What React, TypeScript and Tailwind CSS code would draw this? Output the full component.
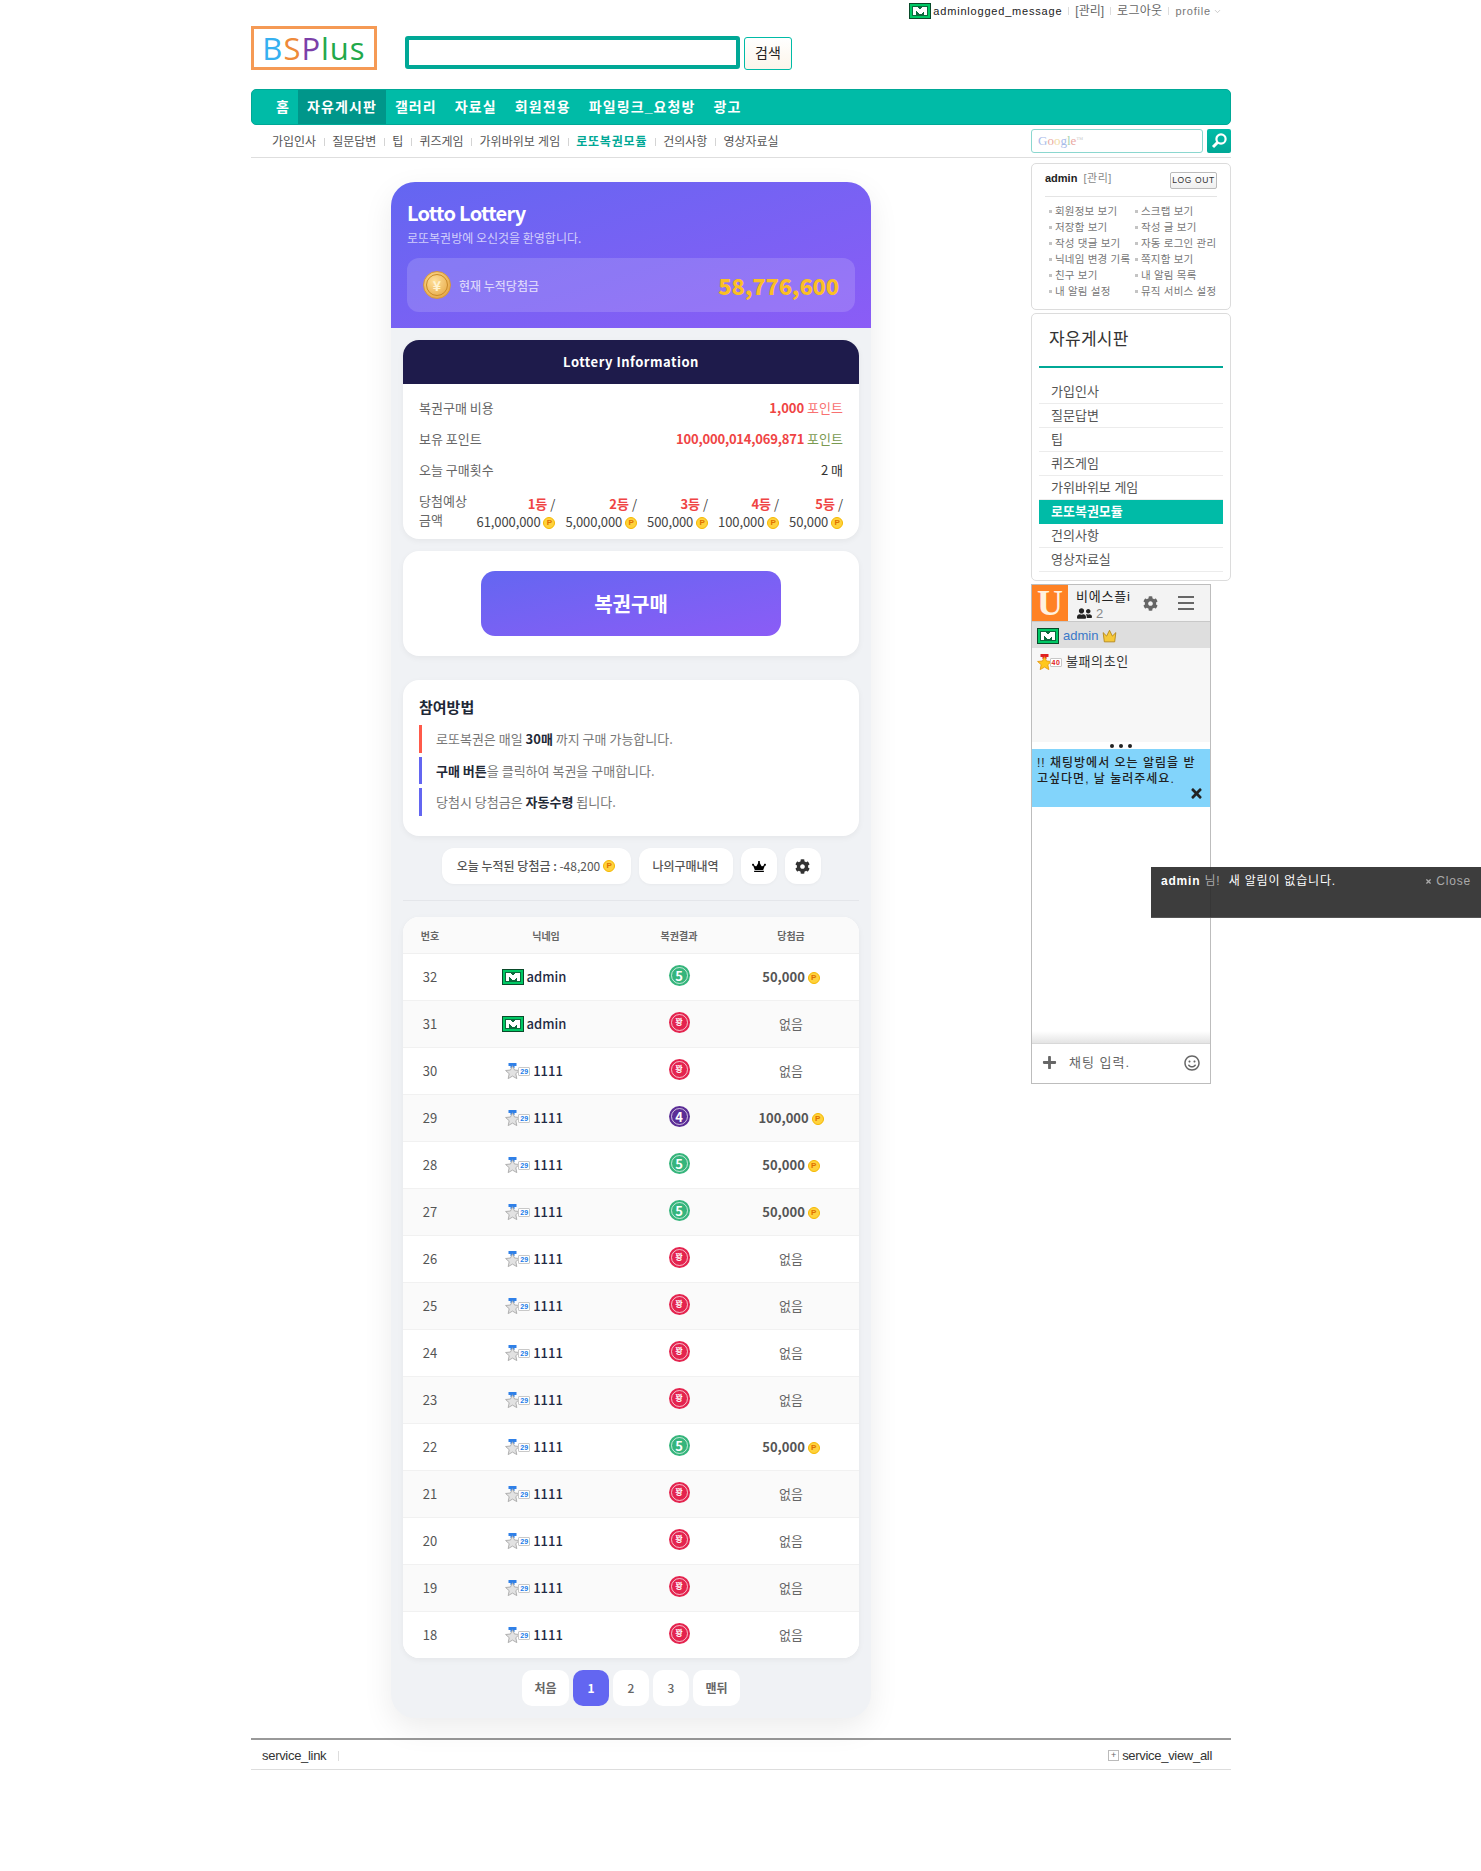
import React from "react";
import { FaCog, FaCrown, FaPlus, FaRegSmile, FaTimes, FaUserFriends } from "react-icons/fa";
import { ChevronDown } from "lucide-react";

function MBadge() {
  return (
    <svg width="22" height="16" viewBox="0 0 22 16" className="shrink-0" shapeRendering="crispEdges">
      <rect width="22" height="16" fill="#0a4a2a" />
      <rect x="1" y="1" width="20" height="14" fill="#00c864" />
      <rect x="3" y="3" width="16" height="10" fill="#0b6a3c" />
      <path d="M4 4h5l2 3 2-3h5v8h-3V8l-3 3h-2L7 8v4H4z" fill="#fff" />
    </svg>
  );
}

function Medal({ n = "29", gold = false }: { n?: string; gold?: boolean }) {
  const ribbon = gold ? "#e02020" : "#2f80e8";
  const star = gold ? "#ffc81e" : "#e2e2e2";
  const edge = gold ? "#e89a10" : "#a8a8a8";
  return (
    <span className="inline-flex items-center shrink-0">
      <svg width="15" height="17" viewBox="0 0 15 17" className="shrink-0">
        <rect x="3.5" y="0" width="8" height="3" fill={ribbon} />
        <rect x="5.5" y="3" width="4" height="2" fill={ribbon} />
        <path d="M7.5 2.8l2 4.2 4.9.5-3.6 3.2 1 4.9-4.3-2.5-4.3 2.5 1-4.9L.6 7.5 5.5 7z" fill={star} stroke={edge} strokeWidth="0.9" />
      </svg>
      <span className={`-ml-[2px] flex h-[9px] w-[12px] items-center justify-center rounded-[1px] border border-[#c8c8c8] bg-white font-['Liberation_Sans',sans-serif] text-[7px] leading-none font-bold ${gold ? "text-[#e02020]" : "text-[#1a7ae8]"}`}>{n}</span>
    </span>
  );
}

function Coin({ className = "" }: { className?: string }) {
  return (
    <span className={`inline-flex h-[12px] w-[12px] items-center justify-center rounded-full border border-[#f5b800] bg-[#ffd23c] align-[2px] font-['Liberation_Sans',sans-serif] text-[8px] leading-none font-bold text-[#e07000] ${className}`}>P</span>
  );
}

function Ball({ kind }: { kind: "5" | "4" | "꽝" }) {
  const cls = kind === "5" ? "bg-[#36b57c]" : kind === "4" ? "bg-[#5b2d96]" : "bg-[#e4244f]";
  return (
    <div className={`flex h-[21px] w-[21px] -translate-y-[2px] items-center justify-center rounded-full ${cls}`}>
      <div className={`flex h-[17px] w-[17px] items-center justify-center rounded-full border border-white/70 font-bold text-white ${kind === "꽝" ? "text-[8px]" : "text-[13px]"} leading-none`}>{kind}</div>
    </div>
  );
}

const rows: [string, boolean, "5" | "4" | "꽝", string][] = [
  ["32", true, "5", "50,000"],
  ["31", true, "꽝", ""],
  ["30", false, "꽝", ""],
  ["29", false, "4", "100,000"],
  ["28", false, "5", "50,000"],
  ["27", false, "5", "50,000"],
  ["26", false, "꽝", ""],
  ["25", false, "꽝", ""],
  ["24", false, "꽝", ""],
  ["23", false, "꽝", ""],
  ["22", false, "5", "50,000"],
  ["21", false, "꽝", ""],
  ["20", false, "꽝", ""],
  ["19", false, "꽝", ""],
  ["18", false, "꽝", ""],
];

const prizes = [
  ["1등", "61,000,000"],
  ["2등", "5,000,000"],
  ["3등", "500,000"],
  ["4등", "100,000"],
  ["5등", "50,000"],
];

const subNav = ["가입인사", "질문답변", "팁", "퀴즈게임", "가위바위보 게임", "로또복권모듈", "건의사항", "영상자료실"];
const mainNav = ["홈", "자유게시판", "갤러리", "자료실", "회원전용", "파일링크_요청방", "광고"];
const loginLinks = [
  "회원정보 보기", "스크랩 보기",
  "저장함 보기", "작성 글 보기",
  "작성 댓글 보기", "자동 로그인 관리",
  "닉네임 변경 기록", "쪽지함 보기",
  "친구 보기", "내 알림 목록",
  "내 알림 설정", "뮤직 서비스 설정",
];

function Lottery() {
  return (
    <div className="mx-auto w-[480px] rounded-[24px] bg-[#f0f2f5] pb-3 font-['Noto_Sans_CJK_KR','Noto_Sans',sans-serif] shadow-[0_10px_30px_rgba(0,0,0,0.08)]">
      <div className="h-[146px] rounded-t-[24px] bg-gradient-to-br from-[#6366f1] to-[#8b5cf6] px-4 pt-[19px]">
        <div className="text-[20px] leading-[24px] font-bold tracking-[-0.7px] text-white">Lotto Lottery</div>
        <div className="mt-[4px] text-[12px] leading-[18px] text-white/70">로또복권방에 오신것을 환영합니다.</div>
        <div className="mt-[11px] flex h-[54px] items-center justify-between rounded-[12px] bg-white/15 px-4">
          <div className="flex items-center gap-2">
            <div className="flex h-[28px] w-[28px] items-center justify-center rounded-full border border-[#d89838] bg-[radial-gradient(circle_at_40%_35%,#ffe09a,#e09a30)]">
              <div className="flex h-[22px] w-[22px] items-center justify-center rounded-full border border-[#c98a28] text-[14px] font-bold text-[#fff3d0]">¥</div>
            </div>
            <span className="pt-px text-[12px] font-medium text-white/70">현재 누적당첨금</span>
          </div>
          <span className="text-[22px] font-black tracking-[-0.2px] text-[#fbbf24]">58,776,600</span>
        </div>
      </div>

      <div className="mx-3 mt-3 rounded-[16px] bg-white pb-[7px] shadow-[0_2px_6px_rgba(0,0,0,0.05)]">
        <div className="flex h-[44px] items-center justify-center rounded-t-[16px] bg-[#1e1b4b] text-[13px] font-bold tracking-[0.5px] text-white">Lottery Information</div>
        <div className="px-4 pt-2 text-[13px]">
          <div className="flex h-[31px] items-center justify-between text-[#666]">
            <span>복권구매 비용</span>
            <span className="text-[#ef4444]"><b className="font-bold">1,000</b> <span className="text-[#f87171]">포인트</span></span>
          </div>
          <div className="flex h-[31px] items-center justify-between text-[#666]">
            <span>보유 포인트</span>
            <span><b className="font-bold tracking-[-0.2px] text-[#ef4444]">100,000,014,069,871</b> <span className="text-[#7a9a50]">포인트</span></span>
          </div>
          <div className="flex h-[31px] items-center justify-between text-[#666]">
            <span>오늘 구매횟수</span>
            <span className="text-[#333]">2 매</span>
          </div>
          <div className="flex items-center justify-between pt-[5px] pb-[3px] text-[#666]">
            <span className="leading-[19px]">당첨예상<br />금액</span>
            <div className="flex translate-y-[2px] gap-[10px] pt-[3px]">
              {prizes.map(([a, b]) => (
                <div key={a} className="text-right leading-[18px]">
                  <div><b className="font-bold text-[#ef4444]">{a}</b> <span className="text-[#444]">/</span></div>
                  <div className="tracking-[-0.1px] text-[#444]">{b} <Coin /></div>
                </div>
              ))}
            </div>
          </div>
        </div>
      </div>

      <div className="mx-3 mt-3 rounded-[16px] bg-white px-[78px] py-5 shadow-[0_2px_6px_rgba(0,0,0,0.05)]">
        <div className="flex h-[65px] items-center justify-center rounded-[14px] bg-gradient-to-br from-[#6366f1] to-[#8b5cf6] pt-px text-[20px] font-bold text-white">복권구매</div>
      </div>

      <div className="mx-3 mt-6 h-[156px] rounded-[16px] bg-white px-4 pt-[16px] shadow-[0_2px_6px_rgba(0,0,0,0.05)]">
        <div className="text-[15px] leading-[22px] font-bold text-[#1f2937]">참여방법</div>
        <div className="mt-[7px] flex h-[28px] items-center border-l-[3px] border-[#ff5a4a] pl-[14px] text-[13px] text-[#777]"><span>로또복권은 매일 <b className="font-bold text-[#1f2937]">30매</b> 까지 구매 가능합니다.</span></div>
        <div className="mt-1 flex h-[27px] items-center border-l-[3px] border-[#6366f1] pl-[14px] text-[13px] text-[#777]"><span><b className="font-bold text-[#1f2937]">구매 버튼</b>을 클릭하여 복권을 구매합니다.</span></div>
        <div className="mt-1 flex h-[28px] items-center border-l-[3px] border-[#6366f1] pl-[14px] text-[13px] text-[#777]"><span>당첨시 당첨금은 <b className="font-bold text-[#1f2937]">자동수령</b> 됩니다.</span></div>
      </div>

      <div className="mt-3 flex justify-center gap-2">
        <div className="flex h-[36px] w-[189px] items-center justify-center gap-[3px] rounded-[12px] bg-white text-[12px] text-[#555] shadow-[0_1px_3px_rgba(0,0,0,0.04)]"><span><b className="font-medium">오늘 누적된 당첨금 :</b> -48,200</span> <Coin /></div>
        <div className="flex h-[36px] w-[94px] items-center justify-center rounded-[12px] bg-white text-[12px] font-medium text-[#555] shadow-[0_1px_3px_rgba(0,0,0,0.04)]">나의구매내역</div>
        <div className="flex h-[36px] w-[36px] items-center justify-center rounded-[12px] bg-white shadow-[0_1px_3px_rgba(0,0,0,0.04)]"><FaCrown className="h-[13px] w-[14px] text-black" /></div>
        <div className="flex h-[36px] w-[36px] items-center justify-center rounded-[12px] bg-white shadow-[0_1px_3px_rgba(0,0,0,0.04)]"><FaCog className="h-[15px] w-[15px] text-[#333]" /></div>
      </div>

      <div className="mx-3 mt-4 border-t border-[#e4e6ea]" />

      <div className="mx-3 mt-4 overflow-hidden rounded-[16px] bg-white shadow-[0_2px_6px_rgba(0,0,0,0.05)]">
        <div className="grid h-[37px] grid-cols-[54px_178px_88px_136px] items-center border-b border-[#f0f0f0] bg-[#fafafa] pt-px text-center text-[10px] font-bold text-[#666]">
          <div>번호</div><div>닉네임</div><div>복권결과</div><div>당첨금</div>
        </div>
        {rows.map(([no, admin, ball, prize], i) => (
          <div key={no} className={`grid h-[47px] grid-cols-[54px_178px_88px_136px] items-center border-b border-[#f1f1f1] text-center text-[13px] last:h-[46px] last:border-b-0 ${i % 2 ? "bg-[#fafafa]" : "bg-white"}`}>
            <div className="text-[#555]">{no}</div>
            <div className="flex items-center justify-center gap-[3px] pr-[24px] font-medium text-[#1f2a44]">
              {admin ? <MBadge /> : <Medal />}
              <span>{admin ? "admin" : "1111"}</span>
            </div>
            <div className="flex justify-center"><Ball kind={ball} /></div>
            <div>
              {prize ? <span className="font-semibold text-[#555]">{prize} <Coin /></span> : <span className="text-[#666]">없음</span>}
            </div>
          </div>
        ))}
      </div>

      <div className="mt-3 flex justify-center gap-[4px] text-[12px] font-semibold text-[#666]">
        <div className="flex h-[36px] w-[47px] items-center justify-center rounded-[10px] bg-white">처음</div>
        <div className="flex h-[36px] w-[36px] items-center justify-center rounded-[10px] bg-[#6366f1] font-bold text-white">1</div>
        <div className="flex h-[36px] w-[36px] items-center justify-center rounded-[10px] bg-white font-medium">2</div>
        <div className="flex h-[36px] w-[36px] items-center justify-center rounded-[10px] bg-white font-medium">3</div>
        <div className="flex h-[36px] w-[47px] items-center justify-center rounded-[10px] bg-white">맨뒤</div>
      </div>
    </div>
  );
}

function Sidebar() {
  return (
    <aside className="w-[200px] shrink-0 pt-[5px] font-['Liberation_Sans','Noto_Sans_CJK_KR',sans-serif]">
      <div className="h-[147px] rounded-[5px] border border-[#dcdcdc] px-[13px] pt-[8px]">
        <div className="flex h-[25px] items-start justify-between border-b border-[#e4e4e4]">
          <div className="-mt-[2px] text-[11px]"><b className="text-[#222]">admin</b> <span className="ml-[3px] tracking-[0.5px] text-[#888]">[관리]</span></div>
          <div className="flex h-[17px] w-[47px] items-center justify-center rounded-[2px] border border-[#bbb] bg-gradient-to-b from-white to-[#efefef] text-[8.5px] tracking-[0.6px] text-[#333]">LOG OUT</div>
        </div>
        <div className="mt-[6px] grid grid-cols-[86px_1fr] text-[10.5px] leading-[16px] tracking-[0.2px] whitespace-nowrap text-[#777]">
          {loginLinks.map((l) => (
            <div key={l} className="flex items-center gap-[3px] pl-[4px]"><span className="h-[3px] w-[3px] bg-[#c4c4c4]" />{l}</div>
          ))}
        </div>
      </div>

      <div className="mt-[3px] h-[268px] rounded-[5px] border border-[#dcdcdc] px-[7px]">
        <div className="flex h-[54px] items-center border-b-2 border-[#00a896] pl-[10px] text-[17px] tracking-[0.3px] text-[#333]">자유게시판</div>
        <div className="pt-[12px] text-[13px] text-[#555]">
          {subNav.map((s) => (
            <div key={s} className={`flex h-[24px] items-center pl-[12px] ${s === "로또복권모듈" ? "bg-[#00bba7] font-bold text-white" : "border-b border-[#ececec]"}`}>{s}</div>
          ))}
        </div>
      </div>
    </aside>
  );
}

function Chat() {
  return (
    <div className="absolute top-[584px] left-[1031px] flex h-[500px] w-[180px] flex-col border border-[#bdbdbd] bg-white font-['Liberation_Sans','Noto_Sans_CJK_KR',sans-serif]">
      <div className="flex h-[37px] shrink-0 items-center border-b border-[#c8c8c8] bg-[#f3f3f3]">
        <div className="flex h-[36px] w-[36px] items-center justify-center bg-[#ff8224] font-['Liberation_Serif',serif] text-[36px] leading-none font-bold text-[#fff1e0]">U</div>
        <div className="ml-2 w-[59px] pt-[3px] text-[13px] leading-[17px] text-[#222]">
          <div className="tracking-[0.8px] whitespace-nowrap">비에스플i</div>
          <div className="flex items-center gap-1 pl-[1px] text-[13px] text-[#888]"><FaUserFriends className="h-[13px] w-[15px] text-[#222]" />2</div>
        </div>
        <FaCog className="ml-[8px] h-[15px] w-[15px] text-[#666]" />
        <div className="ml-[20px] flex w-[16px] flex-col gap-[4px]">
          <span className="h-[2px] bg-[#666]" /><span className="h-[2px] bg-[#666]" /><span className="h-[2px] bg-[#666]" />
        </div>
      </div>
      <div className="h-[120px] shrink-0 bg-[#f7f7f7]">
        <div className="flex h-[26px] items-center gap-[4px] bg-[#dedede] pt-px pl-[5px] text-[13px] text-[#3a78c8]">
          <MBadge />admin
          <svg width="15" height="15" viewBox="0 0 13 13"><path d="M1 4l3 3 2.5-5L9 7l3-3-1 8H2z" fill="#f5c83a" stroke="#b08010" strokeWidth="0.7" /></svg>
        </div>
        <div className="mt-[2px] flex h-[24px] items-center gap-[4px] pl-[5px] text-[13px] tracking-[0.6px] text-[#333]"><Medal n="40" gold />불패의초인</div>
      </div>
      <div className="flex h-[7px] shrink-0 items-center justify-center gap-[5px]">
        <span className="h-[4px] w-[4px] rounded-full bg-[#222]" /><span className="h-[4px] w-[4px] rounded-full bg-[#222]" /><span className="h-[4px] w-[4px] rounded-full bg-[#222]" />
      </div>
      <div className="relative h-[58px] shrink-0 bg-[#82d4fb] px-[5px] pt-[6px] text-[12px] leading-[16px] font-medium tracking-[1px] text-[#222]">
        !! 채팅방에서 오는 알림을 받고싶다면, 날 눌러주세요.
        <FaTimes className="absolute right-[7px] bottom-[6px] h-[15px] w-[13px] text-[#222]" />
      </div>
      <div className="flex-1 bg-gradient-to-b from-white from-[95%] to-[#e4e4e4]" />
      <div className="flex h-[40px] shrink-0 items-center border-t border-[#d8d8d8] pb-[2px] pl-[10px] text-[13px] text-[#666]">
        <FaPlus className="h-[15px] w-[15px] text-[#666]" />
        <span className="ml-[12px] tracking-[1px]">채팅 입력.</span>
        <FaRegSmile className="mr-[10px] ml-auto h-[16px] w-[16px] text-[#666]" />
      </div>
    </div>
  );
}

export default function App() {
  return (
    <div className="relative h-[1871px] overflow-hidden bg-white font-['Liberation_Sans','Noto_Sans_CJK_KR',sans-serif]">
      <div className="ml-[251px] w-[980px]">
        <div className="flex h-[26px] justify-end pt-[3px] pr-[9px] text-[12px] text-[#666]">
          <div className="flex h-[16px] items-center">
            <MBadge />
            <span className="ml-[2px] text-[11px] tracking-[0.8px] text-[#222]">adminlogged_message</span>
            <span className="ml-[6px] h-[8px] w-px bg-[#ddd]" />
            <span className="ml-[6px]">[관리]</span>
            <span className="ml-[6px] h-[8px] w-px bg-[#ddd]" />
            <span className="ml-[6px] tracking-[0.3px]">로그아웃</span>
            <span className="ml-[6px] h-[8px] w-px bg-[#ddd]" />
            <span className="ml-[6px] text-[11px] tracking-[0.8px] text-[#777]">profile</span>
            <ChevronDown className="ml-[2px] h-[9px] w-[9px] text-[#bbb]" />
          </div>
        </div>

        <div className="flex h-[63px] items-start">
          <div className="flex h-[44px] w-[126px] items-center justify-center border-[3px] border-[#f59a55] font-['Open_Sans',sans-serif] text-[31px] leading-none font-normal tracking-[1px]">
            <span className="text-[#35b0f0]">B</span><span className="text-[#ee8a3a]">S</span><span className="text-[#7b3fa8]">P</span><span className="text-[#22a84a]">lus</span>
          </div>
          <div className="mt-[10px] ml-[28px] h-[33px] w-[335px] rounded-[3px] border-[4px] border-[#00a896] bg-white" />
          <div className="mt-[11px] ml-[4px] flex h-[33px] w-[48px] items-center justify-center rounded-[3px] border border-[#00bba7] bg-gradient-to-b from-white to-[#fdf5ea] text-[14px] text-[#222]">검색</div>
        </div>

        <nav className="flex h-[36px] overflow-hidden rounded-[5px] border border-[#00a896] bg-[#00bba7] pl-[16px] text-[14px] font-bold tracking-[1.1px] whitespace-nowrap text-white">
          {mainNav.map((n) => (
            <div key={n} className={`flex items-center pt-px ${n === "자유게시판" ? "bg-[#00968a] px-[9px]" : n === "홈" ? "px-[8px]" : "px-[9px]"}`}>{n}</div>
          ))}
        </nav>

        <div className="flex h-[33px] items-center justify-between border-b border-[#dedede] pb-[1px]">
          <div className="flex items-center pt-[3px] pl-[21px] text-[12px] text-[#555]">
            {subNav.map((s, i) => (
              <React.Fragment key={s}>
                {i > 0 && <span className="mx-[7.5px] h-[8px] w-px bg-[#d4d4d4]" />}
                <span className={s === "로또복권모듈" ? "font-bold tracking-[0.8px] text-[#00a896]" : ""}>{s}</span>
              </React.Fragment>
            ))}
          </div>
          <div className="flex items-center gap-[4px]">
            <div className="flex h-[24px] w-[172px] items-center rounded-[3px] border border-[#00a896] pl-[6px] font-['Liberation_Serif',serif] text-[13px] opacity-45">
              <span className="text-[#3a6ad0]">G</span><span className="text-[#d04030]">o</span><span className="text-[#e0b030]">o</span><span className="text-[#3a6ad0]">g</span><span className="text-[#30a050]">l</span><span className="text-[#d04030]">e</span><span className="text-[7px] text-[#888]">™</span>
            </div>
            <div className="flex h-[24px] w-[24px] items-center justify-center rounded-[2px] bg-gradient-to-b from-[#00bba7] to-[#00a896]">
              <svg width="17" height="17" viewBox="0 0 17 17" fill="none" stroke="#fff"><circle cx="10" cy="7" r="4.6" strokeWidth="2.2" /><path d="M6.5 10.5L2 15" strokeWidth="3" /></svg>
            </div>
          </div>
        </div>

        <div className="flex gap-5">
          <main className="w-[760px] pt-[24px]"><Lottery /></main>
          <Sidebar />
        </div>

        <div className="mt-[20px] flex h-[32px] items-center justify-between border-t-[2px] border-b-[1px] border-t-[#999] border-b-[#ddd] px-[11px] pt-[2px] text-[13px] text-[#333]">
          <div className="flex items-center"><span className="tracking-[-0.3px]">service_link</span><span className="ml-[12px] h-[10px] w-px bg-[#ddd]" /></div>
          <div className="flex items-center gap-[3px] pr-[8px]">
            <span className="flex h-[11px] w-[11px] items-center justify-center border border-[#bbb] text-[9px] leading-none text-[#666]">+</span>
            <span className="tracking-[-0.3px]">service_view_all</span>
          </div>
        </div>
      </div>

      <Chat />

      <div className="absolute top-[867px] left-[1151px] h-[51px] w-[330px] border-b border-[#555] bg-[rgba(40,40,40,0.9)] px-[10px] pt-[5px] text-[12px] tracking-[0.8px] text-white">
        <div className="flex items-center justify-between">
          <span><b>admin</b> <span className="text-[#aaa]">님!</span>&nbsp;&nbsp;새 알림이 없습니다.</span>
          <span className="flex items-center gap-[4px] text-[#aaa]"><FaTimes className="h-[7px] w-[7px]" />Close</span>
        </div>
      </div>
    </div>
  );
}
